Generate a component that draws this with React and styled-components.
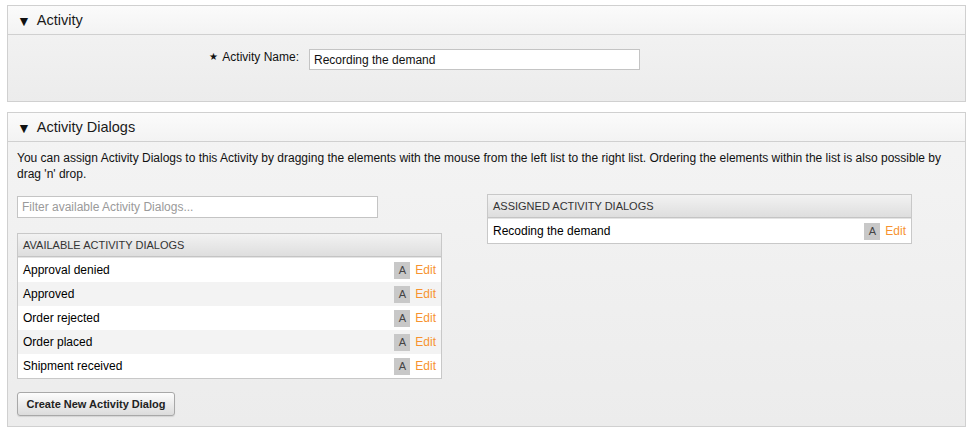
import React from "react";
import styled, { createGlobalStyle } from "styled-components";

const Global = createGlobalStyle`
  html, body { margin: 0; padding: 0; background: #fff; }
  body { font-family: "Liberation Sans", Arial, Helvetica, sans-serif; font-size: 12px; color: #000; }
  * { box-sizing: border-box; }
`;

const Page = styled.div`
  display: flex;
  flex-direction: column;
  gap: 10px;
  padding: 5px 4px 0 7px;
  width: 970px;
`;

const Panel = styled.section`
  border: 1px solid #d0d0d0;
  background: linear-gradient(#f4f4f4, #ececec);
`;

const PanelHeader = styled.div`
  height: 29px;
  display: flex;
  align-items: center;
  gap: 6px;
  padding-left: 9px;
  font-size: 14.5px;
  color: #1a1a1a;
  background: linear-gradient(#fbfbfb, #f3f3f3);
  border-bottom: 1px solid #d0d0d0;
`;

const Arrow = styled.span`
  font-size: 14px;
  line-height: 1;
  color: #111;
  margin-top: 1px;
`;

const Body = styled.div`
  padding: ${(p) => p.$pad};
  height: ${(p) => p.$h};
`;

const FieldRow = styled.div`
  display: grid;
  grid-template-columns: 283px 331px;
  gap: 10px;
  align-items: start;
`;

const Label = styled.label`
  text-align: right;
  padding-top: 1px;
  font-size: 12px;
  color: #111;
`;

const Star = styled.span`
  font-size: 10px;
  margin-right: 4px;
  position: relative;
  top: -1px;
`;

const TextInput = styled.div`
  height: ${(p) => p.$h || "21px"};
  width: ${(p) => p.$w};
  border: 1px solid #c4c4c4;
  background: #fff;
  padding: 0 4px;
  display: flex;
  align-items: center;
  font-size: 12px;
  color: ${(p) => (p.$placeholder ? "#9a9a9a" : "#111")};
`;

const Desc = styled.p`
  margin: 0;
  line-height: 16px;
  font-size: 12px;
  color: #111;
`;

const Columns = styled.div`
  display: grid;
  grid-template-columns: 425px 425px;
  gap: 45px;
  margin-top: ${(p) => p.$mt};
  align-items: start;
`;

const Column = styled.div`
  display: flex;
  flex-direction: column;
  gap: ${(p) => p.$gap || "0"};
  padding-top: ${(p) => p.$pt || "0"};
`;

const List = styled.div`
  border: 1px solid #c8c8c8;
  background: #fff;
`;

const ListHeader = styled.div`
  height: 23px;
  display: flex;
  align-items: center;
  padding-left: 5px;
  font-size: 11px;
  color: #333;
  text-transform: uppercase;
  background: linear-gradient(#f2f2f2, #dedede);
  border-bottom: 1px solid #c4c4c4;
  box-shadow: 0 1px 0 #e4e4e4;
`;

const Rows = styled.div`
  padding-top: 1px;
`;

const Row = styled.div`
  height: 24px;
  display: flex;
  align-items: center;
  padding: 0 5px 0 5px;
  background: ${(p) => (p.$alt ? "#f3f3f3" : "#fff")};
  font-size: 12px;
  color: #000;
`;

const RowName = styled.span`
  flex: 1;
`;

const Badge = styled.span`
  width: 16px;
  height: 17px;
  background: #c8c8c8;
  color: #444;
  font-size: 11px;
  display: flex;
  align-items: center;
  justify-content: center;
  margin-right: 5px;
`;

const EditLink = styled.a`
  color: #f7932f;
  font-size: 12px;
  text-decoration: none;
`;

const Button = styled.button`
  margin-top: ${(p) => p.$mt};
  align-self: flex-start;
  height: 24px;
  width: 158px;
  border: 1px solid #a8a8a8;
  border-radius: 3px;
  background: linear-gradient(#fdfdfd, #dcdcdc);
  font-family: "Liberation Sans", Arial, sans-serif;
  font-size: 11px;
  font-weight: bold;
  color: #222;
  padding: 0;
  box-shadow: 0 1px 1px rgba(0,0,0,0.1);
`;

const available = [
  "Approval denied",
  "Approved",
  "Order rejected",
  "Order placed",
  "Shipment received",
];

function DialogList({ title, items }) {
  return (
    <List>
      <ListHeader>{title}</ListHeader>
      <Rows>
        {items.map((name, i) => (
          <Row key={name} $alt={i % 2 === 1}>
            <RowName>{name}</RowName>
            <Badge>A</Badge>
            <EditLink>Edit</EditLink>
          </Row>
        ))}
      </Rows>
    </List>
  );
}

export default function App() {
  return (
    <>
      <Global />
      <Page>
        <Panel>
          <PanelHeader>
            <Arrow>▼</Arrow>
            <span>Activity</span>
          </PanelHeader>
          <Body $pad="14px 8px 0 8px" $h="66px">
            <FieldRow>
              <Label>
                <Star>★</Star>Activity Name:
              </Label>
              <TextInput $w="331px">Recording the demand</TextInput>
            </FieldRow>
          </Body>
        </Panel>
        <Panel>
          <PanelHeader>
            <Arrow>▼</Arrow>
            <span>Activity Dialogs</span>
          </PanelHeader>
          <Body $pad="8px 9px 0 9px" $h="284px">
            <Desc>
              You can assign Activity Dialogs to this Activity by dragging the elements with the mouse from the left list to the right list. Ordering the elements within the list is also possible by drag 'n' drop.
            </Desc>
            <Columns $mt="12px">
              <Column>
                <TextInput $w="361px" $h="22px" $placeholder style={{ marginTop: 2 }}>
                  Filter available Activity Dialogs...
                </TextInput>
                <Column $pt="15px">
                  <DialogList title="Available Activity Dialogs" items={available} />
                </Column>
                <Button $mt="13px">Create New Activity Dialog</Button>
              </Column>
              <Column>
                <DialogList title="Assigned Activity Dialogs" items={["Recoding the demand"]} />
              </Column>
            </Columns>
          </Body>
        </Panel>
      </Page>
    </>
  );
}
